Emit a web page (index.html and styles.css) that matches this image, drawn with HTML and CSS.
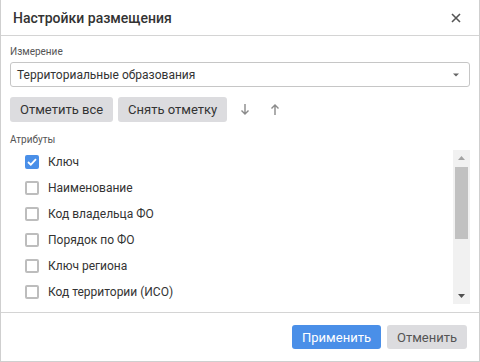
FILE: index.html
```html
<!DOCTYPE html>
<html lang="ru">
<head>
<meta charset="utf-8">
<link rel="stylesheet" href="styles.css">
</head>
<body>
<div class="dialog">
  <div class="header">
    <span class="title">Настройки размещения</span>
    <svg class="close" width="10" height="10" viewBox="0 0 10 10"><path d="M1 1L9 9M9 1L1 9" stroke="#555" stroke-width="1.6"/></svg>
  </div>
  <div class="body">
    <div class="label label-dim">Измерение</div>
    <div class="select">
      <span>Территориальные образования</span>
      <svg width="6" height="4" viewBox="0 0 6 4"><path d="M0 0.5H6L3 3.5Z" fill="#666"/></svg>
    </div>
    <div class="toolbar">
      <button class="btn btn-gray">Отметить все</button>
      <button class="btn btn-gray">Снять отметку</button>
      <svg class="arrow arrow-first" width="10" height="11" viewBox="0 0 10 11"><path d="M5 0V10M1.5 6.5L5 10L8.5 6.5" stroke="#8a8a8a" stroke-width="1.4" fill="none"/></svg>
      <svg class="arrow" width="10" height="11" viewBox="0 0 10 11"><path d="M5 11V1M1.5 4.5L5 1L8.5 4.5" stroke="#8a8a8a" stroke-width="1.4" fill="none"/></svg>
    </div>
    <div class="label label-attr">Атрибуты</div>
    <div class="listbox">
      <div class="list">
        <div class="row"><span class="cb cb-on"><svg width="10" height="8" viewBox="0 0 10 8"><path d="M1 4L3.8 6.7L9 1.2" stroke="#fff" stroke-width="1.8" fill="none"/></svg></span>Ключ</div>
        <div class="row"><span class="cb"></span>Наименование</div>
        <div class="row"><span class="cb"></span>Код владельца ФО</div>
        <div class="row"><span class="cb"></span>Порядок по ФО</div>
        <div class="row"><span class="cb"></span>Ключ региона</div>
        <div class="row"><span class="cb"></span>Код территории (ИСО)</div>
      </div>
      <div class="scrollbar">
        <svg class="sb-arrow" width="7" height="4" viewBox="0 0 7 4"><path d="M0 4H7L3.5 0Z" fill="#a3a3a3"/></svg>
        <div class="sb-track"><div class="sb-thumb"></div></div>
        <svg class="sb-arrow" width="7" height="4" viewBox="0 0 7 4"><path d="M0 0H7L3.5 4Z" fill="#505050"/></svg>
      </div>
    </div>
  </div>
  <div class="footer">
    <button class="btn btn-blue">Применить</button>
    <button class="btn btn-gray btn-cancel">Отменить</button>
  </div>
</div>
</body>
</html>
```
FILE: styles.css
```css
html, body {
  margin: 0;
  padding: 0;
  background: #fff;
}
body {
  font-family: Roboto, "Liberation Sans", sans-serif;
  color: #333;
}
.dialog {
  width: 480px;
  height: 363px;
  margin-top: -1px;
  box-sizing: border-box;
  border: 1px solid #cfcfcf;
  display: flex;
  flex-direction: column;
}
.header {
  height: 36px;
  flex: none;
  box-sizing: border-box;
  border-bottom: 1px solid #d4d4d4;
  display: flex;
  align-items: center;
  justify-content: space-between;
  padding: 0 18px 0 12px;
}
.title {
  font-size: 14px;
  font-weight: 500;
  color: #333;
}
.body {
  flex: 1;
  padding: 0 9px;
  display: flex;
  flex-direction: column;
}
.label {
  font-size: 10px;
  color: #555;
  line-height: 12px;
}
.label-dim {
  margin-top: 10px;
}
.select {
  margin-top: 4px;
  height: 25px;
  box-sizing: border-box;
  border: 1px solid #c6c6c6;
  border-radius: 3px;
  display: flex;
  align-items: center;
  justify-content: space-between;
  padding: 0 10px 0 6px;
  font-size: 12px;
  color: #333;
}
.toolbar {
  margin-top: 10px;
  display: flex;
  align-items: center;
  gap: 5px;
}
.btn {
  font-family: Roboto, "Liberation Sans", sans-serif;
  border: none;
  border-radius: 3px;
  height: 25px;
  padding: 0 10px;
  font-size: 13px;
  color: #333;
  cursor: pointer;
}
.btn-gray {
  background: #dcdcdf;
}
.arrow {
  margin-left: 15px;
}
.arrow-first {
  margin-left: 8px;
}
.label-attr {
  margin-top: 12px;
}
.listbox {
  margin-top: 3px;
  height: 155px;
  display: flex;
}
.list {
  flex: 1;
  overflow: hidden;
  padding-left: 15px;
}
.row {
  height: 26px;
  display: flex;
  align-items: center;
  font-size: 12px;
  color: #333;
}
.cb {
  width: 14px;
  height: 14px;
  box-sizing: border-box;
  border: 2px solid #bdbdbd;
  border-radius: 2px;
  margin-right: 9px;
  display: flex;
  align-items: center;
  justify-content: center;
}
.cb-on {
  background: #4a8fe8;
  border-color: #4a8fe8;
}
.scrollbar {
  width: 17px;
  height: 154px;
  margin-top: 1px;
  background: #f1f1f1;
  display: flex;
  flex-direction: column;
  align-items: center;
}
.sb-arrow {
  flex: none;
  margin: 6px 0;
}
.sb-track {
  flex: 1;
  width: 13px;
}
.sb-thumb {
  margin-top: 1px;
  height: 72px;
  background: #c1c1c1;
}
.footer {
  height: 49px;
  flex: none;
  box-sizing: border-box;
  border-top: 1px solid #d4d4d4;
  display: flex;
  align-items: center;
  justify-content: flex-end;
  gap: 6px;
  padding: 0 12px 0 0;
}
.btn-blue {
  background: #4a8fe8;
  color: #fff;
  width: 89px;
}
.btn-cancel {
  width: 80px;
  color: #555;
}
.btn-blue, .btn-cancel {
  height: 24px;
  font-size: 13px;
  padding: 0;
}
```
